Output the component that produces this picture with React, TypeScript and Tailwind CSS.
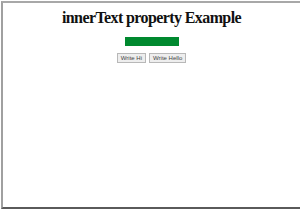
import React from 'react';

export default function App() {
  return (
    <div className="w-[300px] h-[210px] bg-white pt-[1px] pl-[1px] overflow-hidden">
      <div className="w-[299px] h-[208px] border-t-2 border-l-2 border-b-2 border-t-[#a8a8a8] border-l-[#a0a0a0] border-b-[#5a5a5a] flex flex-col items-center" style={{ fontFamily: '"Liberation Serif", serif' }}>
        <h1 className="mt-[6px] text-[16px] font-bold leading-[18px] tracking-[-0.6px] text-[#111]">innerText property Example</h1>
        <div className="mt-[10px] w-[54px] h-[9px] bg-[#00892f]"></div>
        <div className="mt-[7px] flex gap-[3px]" style={{ fontFamily: '"Liberation Sans", sans-serif' }}>
          <button className="h-[10px] px-[3px] text-[6px] leading-none border border-[#b8b8b8] bg-[#eeeeee] text-[#444]">Write Hi</button>
          <button className="h-[10px] px-[3px] text-[6px] leading-none border border-[#b8b8b8] bg-[#eeeeee] text-[#444]">Write Hello</button>
        </div>
      </div>
    </div>
  );
}
